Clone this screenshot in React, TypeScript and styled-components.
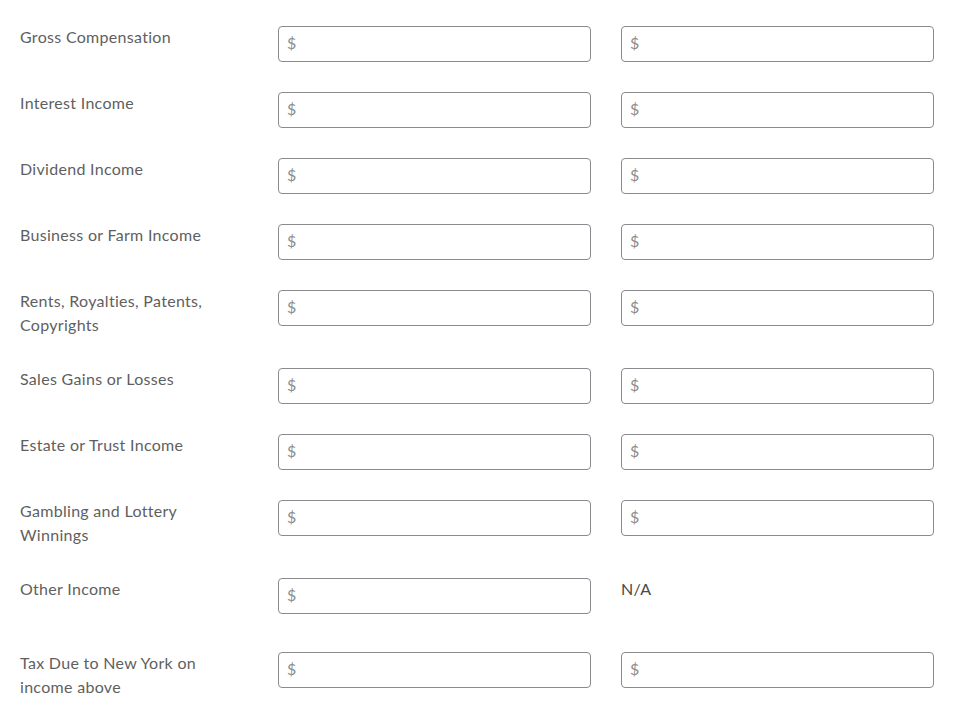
import React from 'react';
import styled, { createGlobalStyle } from 'styled-components';

const GlobalStyle = createGlobalStyle`
  html, body {
    margin: 0;
    padding: 0;
    background: #ffffff;
  }
  body {
    font-family: Lato, 'Noto Sans', 'Liberation Sans', sans-serif;
    -webkit-font-smoothing: antialiased;
  }
`;

type Row = {
  label: string;
  second: 'input' | 'na';
};

const rows: Row[] = [
  { label: 'Gross Compensation', second: 'input' },
  { label: 'Interest Income', second: 'input' },
  { label: 'Dividend Income', second: 'input' },
  { label: 'Business or Farm Income', second: 'input' },
  { label: 'Rents, Royalties, Patents, Copyrights', second: 'input' },
  { label: 'Sales Gains or Losses', second: 'input' },
  { label: 'Estate or Trust Income', second: 'input' },
  { label: 'Gambling and Lottery Winnings', second: 'input' },
  { label: 'Other Income', second: 'na' },
  { label: 'Tax Due to New York on income above', second: 'input' },
];

function App() {
  return (
    <>
      <GlobalStyle />
      <Form>
        {rows.map((row) => (
          <FormRow key={row.label}>
            <Label>{row.label}</Label>
            <MoneyField placeholder="$" aria-label={`${row.label} (first)`} />
            {row.second === 'input' ? (
              <MoneyField placeholder="$" aria-label={`${row.label} (second)`} />
            ) : (
              <NotApplicable>N/A</NotApplicable>
            )}
          </FormRow>
        ))}
      </Form>
    </>
  );
}

const Form = styled.form`
  display: flex;
  flex-direction: column;
  padding: 25px 35px 0 20px;
`;

const FormRow = styled.div`
  display: grid;
  grid-template-columns: 228px 313px 313px;
  column-gap: 30px;
  align-items: start;
  padding-bottom: 29px;
`;

const Label = styled.div`
  max-width: 206px;
  padding-bottom: 1px;
  font-size: 16px;
  font-weight: 400;
  line-height: 24px;
  color: #5f5f5f;
  letter-spacing: 0.3px;
`;

const MoneyField = styled.input`
  box-sizing: border-box;
  width: 100%;
  height: 36px;
  margin-top: 1px;
  padding: 0 8px 3px;
  border: 1px solid #8b8b8f;
  border-radius: 4px;
  background: #ffffff;
  font-family: Lato, 'Noto Sans', 'Liberation Sans', sans-serif;
  font-size: 16px;
  color: #333;
  outline: none;

  &::placeholder {
    color: #8d8d8d;
  }
`;

const NotApplicable = styled.div`
  min-height: 45px;
  font-size: 16px;
  line-height: 24px;
  color: #4a4a4a;
  letter-spacing: 0.3px;
`;

export default App;
